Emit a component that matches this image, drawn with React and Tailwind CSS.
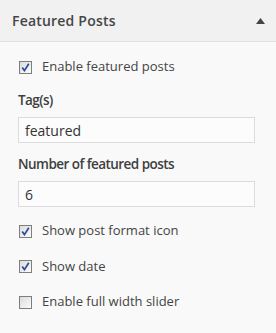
import { useState } from "react";

function Check({ checked, onChange, label }) {
  return (
    <label className="flex h-5 cursor-pointer items-center text-[13px] text-[#444]">
      <span
        onClick={onChange}
        className="ml-px mr-[10px] flex h-[13px] w-[13px] items-center justify-center border border-[#7e7e7e] bg-gradient-to-br from-[#dcdcdc] to-[#fbfbfb]"
      >
        {checked && (
          <svg width="9" height="9" viewBox="0 0 9 9">
            <path d="M1.2 4.6 L3.4 7.6 L7.8 0.8" fill="none" stroke="#2a4a9c" strokeWidth="1.7" />
          </svg>
        )}
      </span>
      {label}
    </label>
  );
}

export default function App() {
  const [opts, setOpts] = useState({ enable: true, icon: true, date: true, full: false });
  const [tag, setTag] = useState("featured");
  const [num, setNum] = useState("6");
  const toggle = (k) => () => setOpts((p) => ({ ...p, [k]: !p[k] }));

  const inputCls =
    "block h-[26px] w-[237px] border border-[#dcdcdc] bg-[#fcfcfc] px-[6px] text-[14px] text-[#333] outline-none";
  const labelCls = "text-[13.5px] font-semibold leading-[19px] tracking-[-0.55px] text-[#3f3f3f]";

  return (
    <div className="h-[333px] w-[276px] bg-[#f9f9f9]" style={{ fontFamily: '"Open Sans", sans-serif' }}>
      <div className="flex h-[42px] items-center justify-between border-b border-[#e2e2e2] bg-[#f1f1f1] pl-3 pr-[11px]">
        <span className="text-[14px] font-semibold tracking-[0.2px] text-[#464646]">Featured Posts</span>
        <svg width="9" height="6" viewBox="0 0 9 6">
          <path d="M4.5 0 L9 6 L0 6 Z" fill="#444" />
        </svg>
      </div>

      <div className="pl-[18px]">
        <div className="pt-[15px]">
          <Check checked={opts.enable} onChange={toggle("enable")} label="Enable featured posts" />
        </div>

        <p className={`mt-[14px] ${labelCls}`}>Tag(s)</p>
        <input className={`mt-[7px] ${inputCls}`} value={tag} onChange={(e) => setTag(e.target.value)} />

        <p className={`mt-[12px] ${labelCls}`}>Number of featured posts</p>
        <input className={`mt-[7px] ${inputCls}`} value={num} onChange={(e) => setNum(e.target.value)} />

        <div className="mt-[14px] flex flex-col gap-[15.5px]">
          <Check checked={opts.icon} onChange={toggle("icon")} label="Show post format icon" />
          <Check checked={opts.date} onChange={toggle("date")} label="Show date" />
          <Check checked={opts.full} onChange={toggle("full")} label="Enable full width slider" />
        </div>
      </div>
    </div>
  );
}
